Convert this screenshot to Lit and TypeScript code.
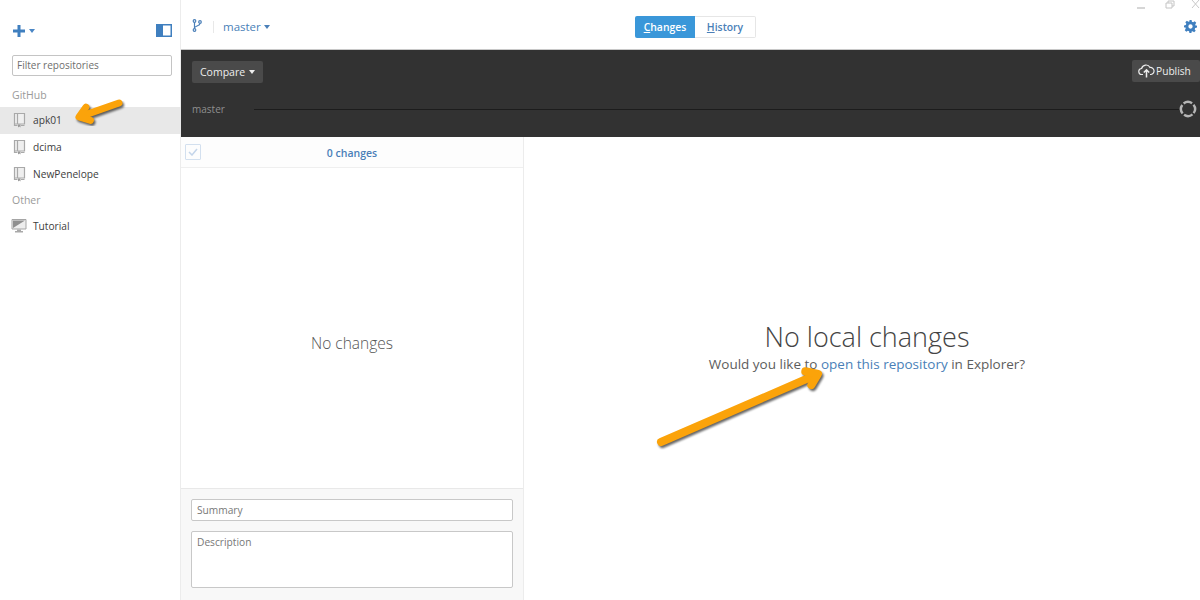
import { LitElement, html, css, svg } from "lit";
import { customElement } from "lit/decorators.js";

const repoIcon = html`<svg class="ricon" width="14" height="16" viewBox="0 0 14 16" fill="none">
  <path d="M1 1h10.5v11.5H1z" fill="#efefef"/>
  <path d="M1.5 1.5h10v10.5h-10zM1.5 1v12.5h3M8 13.5h3.5M4.5 1.5v10.5" stroke="#a9a9a9" stroke-width="1.2"/>
  <path d="M5 12.5h2.5v3l-1.2-1-1.3 1z" fill="#9a9a9a"/>
</svg>`;

const monitorIcon = html`<svg class="ricon mon" width="16" height="14" viewBox="0 0 16 14">
  <path d="M1 .5h14v9.5H1z" fill="#ededed" stroke="#a5a5a5"/>
  <path d="M2 1.5h12L2 9z" fill="#8f8f8f"/>
  <path d="M6 10.5h4v1.5H6zM4 12h8v1.5H4z" fill="#a9a9a9"/>
</svg>`;

const arrow = (x1: number, y1: number, x2: number, y2: number, head: number, w: number) => {
  const a = Math.atan2(y2 - y1, x2 - x1);
  const bx = x2 - Math.cos(a) * head * 0.1;
  const by = y2 - Math.sin(a) * head * 0.1;
  const p1 = [x2 - head * Math.cos(a - 0.62), y2 - head * Math.sin(a - 0.62)];
  const p2 = [x2 - head * Math.cos(a + 0.62), y2 - head * Math.sin(a + 0.62)];
  return svg`<g fill="none" stroke-linecap="round" stroke-linejoin="round">
    <g transform="translate(1.5 2)" stroke="#000" opacity=".6" filter="url(#soft)">
      <path d="M${x1} ${y1}L${bx} ${by}" stroke-width=${w}/>
      <path d="M${p1[0]} ${p1[1]}L${x2} ${y2}L${p2[0]} ${p2[1]}" stroke-width=${w}/>
    </g>
    <g stroke="#fba30a">
      <path d="M${x1} ${y1}L${bx} ${by}" stroke-width=${w}/>
      <path d="M${p1[0]} ${p1[1]}L${x2} ${y2}L${p2[0]} ${p2[1]}" stroke-width=${w}/>
    </g>
  </g>`;
};

@customElement("app-root")
export class AppRoot extends LitElement {
  static override styles = css`
    :host {
      display: block;
      position: relative;
      width: 1200px;
      height: 600px;
      overflow: hidden;
      background: #fff;
      font-family: "Open Sans", "Noto Sans", sans-serif;
      font-size: 11px;
      color: #444;
    }

    .app {
      display: grid;
      grid-template-columns: 181px 1fr;
      height: 600px;
    }

    .sidebar {
      border-right: 1px solid #ececec;
      display: flex;
      flex-direction: column;
    }

    .side-top {
      height: 50px;
      padding: 25px 8px 0 13px;
      box-sizing: border-box;
      display: flex;
      align-items: flex-start;
      justify-content: space-between;
    }

    .plus {
      display: flex;
      align-items: center;
      gap: 4px;
    }

    .caret {
      width: 0;
      height: 0;
      border-left: 3px solid transparent;
      border-right: 3px solid transparent;
      border-top: 4px solid currentColor;
      display: inline-block;
    }

    .plus .caret {
      color: #4a86c5;
    }

    .filter {
      margin: 5px 8px 0 12px;
      height: 21px;
      border: 1px solid #c4c4c4;
      border-radius: 2px;
      padding-left: 4px;
      line-height: 19px;
      color: #6e6e6e;
      font-size: 10px;
      box-sizing: border-box;
    }

    .group {
      color: #9a9a9a;
      padding-left: 12px;
      height: 23px;
      line-height: 23px;
      margin-top: 8px;
      font-size: 10.5px;
    }

    .repo {
      height: 27px;
      display: flex;
      align-items: center;
      padding: 0 0 2px 13px;
      box-sizing: border-box;
      gap: 6px;
      color: #3d3d3d;
      font-size: 10.2px;
    }

    .repo.sel {
      background: #e8e8e8;
      margin-right: -1px;
    }

    .ricon {
      width: 14px;
      flex: none;
    }

    .ricon.mon {
      width: 16px;
      margin-left: -2px;
    }

    .group.other {
      margin-top: 0;
      height: 25px;
      line-height: 25px;
    }

    .main {
      display: flex;
      flex-direction: column;
      min-width: 0;
    }

    .topbar {
      height: 49px;
      display: flex;
      align-items: flex-start;
      box-sizing: border-box;
      position: relative;
    }

    .branch {
      display: flex;
      align-items: center;
      padding: 19px 0 0 11px;
      color: #4a7fb8;
      font-size: 11.5px;
    }

    .sep {
      width: 1px;
      height: 12px;
      background: #e8e8e8;
      margin: 0 9px 0 11px;
    }

    .branch .caret {
      margin-left: 3px;
      color: #4a7fb8;
    }

    .tabs {
      position: absolute;
      left: 454px;
      top: 16px;
      display: flex;
      height: 22px;
      font-weight: 600;
      font-size: 10.4px;
      line-height: 22px;
      text-align: center;
    }

    .tab {
      box-sizing: border-box;
      width: 60px;
      background: #3a97d9;
      color: #fff;
      border-radius: 2px 0 0 2px;
    }

    .tab.off {
      width: 61px;
      background: #fff;
      color: #4a7fb8;
      border: 1px solid #e6e6e6;
      border-left: none;
      border-radius: 0 2px 2px 0;
      line-height: 20px;
    }

    .gear {
      position: absolute;
      right: 3px;
      top: 20px;
    }

    .dark {
      height: 88px;
      background: #323232;
      border-top: 1px solid #c8c8c8;
      box-sizing: border-box;
      padding: 11px 0 0 11px;
      display: flex;
      flex-direction: column;
    }

    .dark-row {
      display: flex;
      justify-content: space-between;
      height: 22px;
    }

    .btn {
      background: #4a4a4a;
      color: #eee;
      border-radius: 2px;
      height: 22px;
      display: flex;
      align-items: center;
      padding: 0 8px;
      gap: 4px;
      box-sizing: border-box;
      font-size: 10.5px;
    }

    .publish {
      width: 68px;
      padding: 0 0 0 6px;
      margin-top: -1px;
      gap: 1px;
      font-size: 10.2px;
    }

    .timeline {
      display: flex;
      align-items: center;
      color: #8f8f8f;
      font-size: 10px;
      margin-top: 16px;
      height: 20px;
    }

    .line {
      flex: 1;
      height: 1px;
      background: #1c1c1c;
      margin-left: 29px;
    }

    .body {
      flex: 1;
      display: flex;
      min-height: 0;
    }

    .changes {
      width: 343px;
      box-sizing: border-box;
      border-right: 1px solid #ececec;
      display: flex;
      flex-direction: column;
    }

    .chead {
      height: 31px;
      border-bottom: 1px solid #efefef;
      box-sizing: border-box;
      background: #fdfdfd;
      display: flex;
      align-items: center;
      position: relative;
      padding-left: 4px;
    }

    .check {
      width: 14px;
      height: 14px;
      border: 1px solid #d3e0ef;
      border-radius: 1px;
      display: flex;
      align-items: center;
      justify-content: center;
    }

    .count {
      flex: 1;
      text-align: center;
      color: #4a7fb8;
      font-weight: 600;
      font-size: 10.5px;
      padding: 2px 20px 0 0;
    }

    .empty {
      flex: 1;
      display: flex;
      align-items: center;
      justify-content: center;
      font-size: 15.5px;
      font-weight: 300;
      color: #555;
      padding-top: 30px;
    }

    .commit {
      height: 112px;
      box-sizing: border-box;
      background: #f8f8f8;
      border-top: 1px solid #e8e8e8;
      padding: 10px 10px 0;
      display: flex;
      flex-direction: column;
      gap: 10px;
    }

    .field {
      background: #fff;
      border: 1px solid #c8c8c8;
      border-radius: 2px;
      color: #777;
      padding-left: 5px;
      font-size: 10.2px;
      box-sizing: border-box;
    }

    .field.sum {
      height: 22px;
      line-height: 20px;
    }

    .field.desc {
      height: 57px;
      padding-top: 3px;
    }

    .detail {
      flex: 1;
      display: flex;
      flex-direction: column;
      align-items: center;
      padding: 181px 0 0 10px;
      box-sizing: border-box;
    }

    h1 {
      margin: 0;
      font-size: 27px;
      font-weight: 300;
      color: #444;
      line-height: 37px;
    }

    .sub {
      font-size: 13.5px;
      color: #5d5d5d;
      line-height: 17px;
      margin-top: 1px;
    }

    .sub a {
      color: #4a7fb8;
    }

    .overlay {
      position: absolute;
      left: 0;
      top: 0;
      pointer-events: none;
    }
  `;

  override render() {
    return html`
      <div class="app">
        <aside class="sidebar">
          <div class="side-top">
            <div class="plus">
              <svg width="12" height="12" viewBox="0 0 12 12"><path d="M4.5 0h3v4.5H12v3H7.5V12h-3V7.5H0v-3h4.5z" fill="#3f7fbf"/></svg>
              <span class="caret"></span>
            </div>
            <svg width="16" height="13" viewBox="0 0 16 13" style="margin-top:-1px">
              <rect x=".75" y=".75" width="14.5" height="11.5" fill="#fff" stroke="#3f7fbf" stroke-width="1.5"/>
              <rect x="1" y="1" width="6" height="11" fill="#3f7fbf"/>
            </svg>
          </div>
          <div class="filter">Filter repositories</div>
          <div class="group">GitHub</div>
          <div class="repo sel">${repoIcon}<span>apk01</span></div>
          <div class="repo">${repoIcon}<span>dcima</span></div>
          <div class="repo">${repoIcon}<span>NewPenelope</span></div>
          <div class="group other">Other</div>
          <div class="repo">${monitorIcon}<span>Tutorial</span></div>
        </aside>
        <main class="main">
          <div class="topbar">
            <div class="branch">
              <svg width="10" height="13" viewBox="0 0 10 13" fill="none" stroke="#4a7fb8" stroke-width="1.2" style="margin-top:-3px">
                <circle cx="2.5" cy="2" r="1.3"/><circle cx="2.5" cy="11" r="1.3"/><circle cx="8" cy="3" r="1.3"/>
                <path d="M2.5 3.5v6M8 4.5c0 2.5-5.5 2.5-5.5 4.5"/>
              </svg>
              <span class="sep"></span>
              <span>master</span><span class="caret"></span>
            </div>
            <div class="tabs">
              <div class="tab"><u>C</u>hanges</div>
              <div class="tab off"><u>H</u>istory</div>
            </div>
            <svg class="gear" width="13" height="13" viewBox="0 0 24 24"><path fill="#3f7fbf" d="M10 0h4l.6 3.3 2.3 1 2.8-1.9 2.9 2.9-1.9 2.8 1 2.3L24 10v4l-3.3.6-1 2.3 1.9 2.8-2.9 2.9-2.8-1.9-2.3 1L14 24h-4l-.6-3.3-2.3-1-2.8 1.9-2.9-2.9 1.9-2.8-1-2.3L0 14v-4l3.3-.6 1-2.3-1.9-2.8 2.9-2.9 2.8 1.9 2.3-1zM12 8a4 4 0 1 0 0 8 4 4 0 0 0 0-8z" fill-rule="evenodd"/></svg>
          </div>
          <div class="dark">
            <div class="dark-row">
              <div class="btn">Compare <span class="caret"></span></div>
              <div class="btn publish">
                <svg width="17" height="14" viewBox="0 0 17 14" fill="none" stroke="#eee" stroke-width="1.2">
                  <path d="M5 10.5H4a3 3 0 0 1-.4-6A4.5 4.5 0 0 1 12 3.5a3.5 3.5 0 0 1 1 7h-1"/>
                  <path d="M8.5 13.5V6M5.8 8.5l2.7-2.7 2.7 2.7" stroke-width="1.5"/>
                </svg>
                Publish
              </div>
            </div>
            <div class="timeline">
              <span>master</span>
              <span class="line"></span>
              <svg width="18" height="18" viewBox="0 0 18 18" style="margin-right:3px">
                <circle cx="9" cy="9" r="7" fill="#323232" stroke="#b5b5b5" stroke-width="2.4" stroke-dasharray="9 2" transform="rotate(50 9 9)"/>
              </svg>
            </div>
          </div>
          <div class="body">
            <section class="changes">
              <div class="chead">
                <span class="check">
                  <svg width="10" height="8" viewBox="0 0 10 8" fill="none"><path d="M1 4l3 3 5-6" stroke="#c4d5ea" stroke-width="1.5"/></svg>
                </span>
                <span class="count">0 changes</span>
              </div>
              <div class="empty">No changes</div>
              <div class="commit">
                <div class="field sum">Summary</div>
                <div class="field desc">Description</div>
              </div>
            </section>
            <section class="detail">
              <h1>No local changes</h1>
              <div class="sub">Would you like to <a>open this repository</a> in Explorer?</div>
            </section>
          </div>
        </main>
      </div>
      <svg class="overlay" width="1200" height="600" viewBox="0 0 1200 600">
        <defs><filter id="soft" x="-20%" y="-20%" width="140%" height="140%"><feGaussianBlur stdDeviation="1"/></filter></defs>
        <g fill="none" stroke="#c4c4c4" stroke-width="1">
          <path d="M1137 8h8" stroke="#c8c8c8" stroke-width="1.5"/>
          <path d="M1166 3h6v5h-6zM1168 3V1h6v5h-2"/>
          <path d="M1192 0l7 8M1199 0l-7 8" stroke="#c8c8c8"/>
        </g>
        ${arrow(119, 103, 79, 117, 12, 7)}
        ${arrow(661, 442, 818, 374, 13, 8)}
      </svg>
    `;
  }
}
